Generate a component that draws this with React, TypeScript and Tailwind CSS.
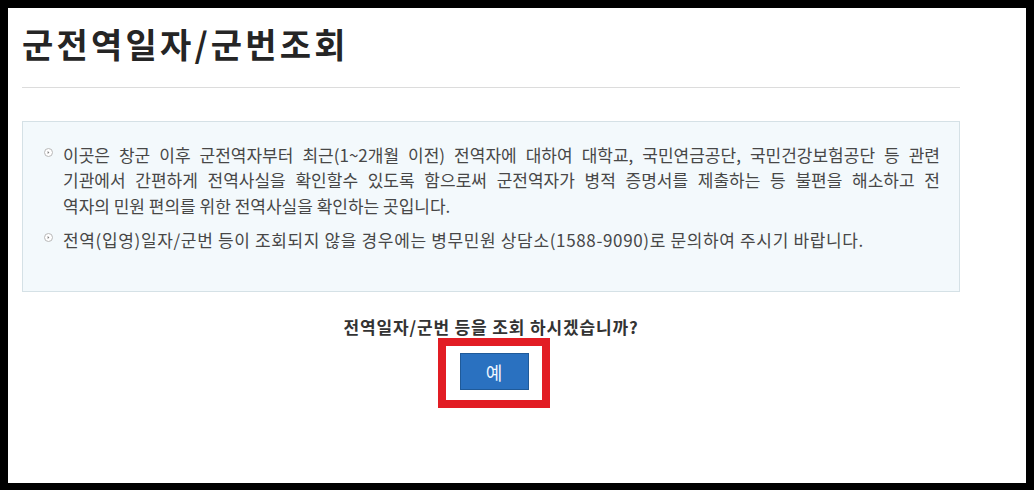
import React from "react";

function Bullet() {
  return (
    <svg width="9" height="9" viewBox="0 0 9 9" className="mt-[6px] shrink-0">
      <circle cx="4.5" cy="4.5" r="4" fill="#ffffff" stroke="#b8b8b8" strokeWidth="1" />
      <path d="M3.6 2.9 L5.4 4.5 L3.6 6.1 Z" fill="#808080" />
    </svg>
  );
}

export default function App() {
  return (
    <div className="w-[1034px] h-[490px] bg-black pt-[8px] pl-[8px] pr-[8px] pb-[7px]">
      <div
        className="h-full bg-white pl-[14px] pt-[16px]"
        style={{ fontFamily: '"Noto Sans CJK KR", "Noto Sans", sans-serif' }}
      >
        <div className="w-[938px]">
          <h1 className="text-[34px] leading-[1.2] font-bold text-[#252525] mb-[22px] tracking-[3.2px]">
            군전역일자/군번조회
          </h1>
          <div className="h-px bg-[#dcdcdc]" />

          <div className="mt-[33px] border border-[#d5e1e6] bg-[#f3f9fc] pt-[20px] pb-[39px] pl-[21px] pr-[10px] text-[17px] leading-[25.5px] text-[#474747]">
            <div className="flex gap-[10px]">
              <Bullet />
              <div className="w-[877px]">
                <span className="block whitespace-nowrap text-justify [text-align-last:justify]">
                  이곳은 창군 이후 군전역자부터 최근(1~2개월 이전) 전역자에 대하여 대학교, 국민연금공단, 국민건강보험공단 등 관련
                </span>
                <span className="block whitespace-nowrap text-justify [text-align-last:justify]">
                  기관에서 간편하게 전역사실을 확인할수 있도록 함으로써 군전역자가 병적 증명서를 제출하는 등 불편을 해소하고 전
                </span>
                <span className="block whitespace-nowrap">
                  역자의 민원 편의를 위한 전역사실을 확인하는 곳입니다.
                </span>
              </div>
            </div>
            <div className="flex gap-[10px] mt-[8.5px]">
              <Bullet />
              <p className="tracking-[0.65px]">
                전역(입영)일자/군번 등이 조회되지 않을 경우에는 병무민원 상담소(1588-9090)로 문의하여 주시기 바랍니다.
              </p>
            </div>
          </div>

          <p className="mt-[25px] text-center text-[17px] leading-[20px] font-bold text-[#333333] tracking-[0.85px]">
            전역일자/군번 등을 조회 하시겠습니까?
          </p>

          <div className="flex justify-center mt-px">
            <div className="border-[8px] border-[#e21d24] pl-[14px] pr-[13px] pt-[7px] pb-[10px] ml-[5px]">
              <button className="w-[69px] h-[37px] bg-[#2a71c0] border border-[#1f5a99] text-[#eef6ff] text-[18px] leading-none">
                예
              </button>
            </div>
          </div>
        </div>
      </div>
    </div>
  );
}
